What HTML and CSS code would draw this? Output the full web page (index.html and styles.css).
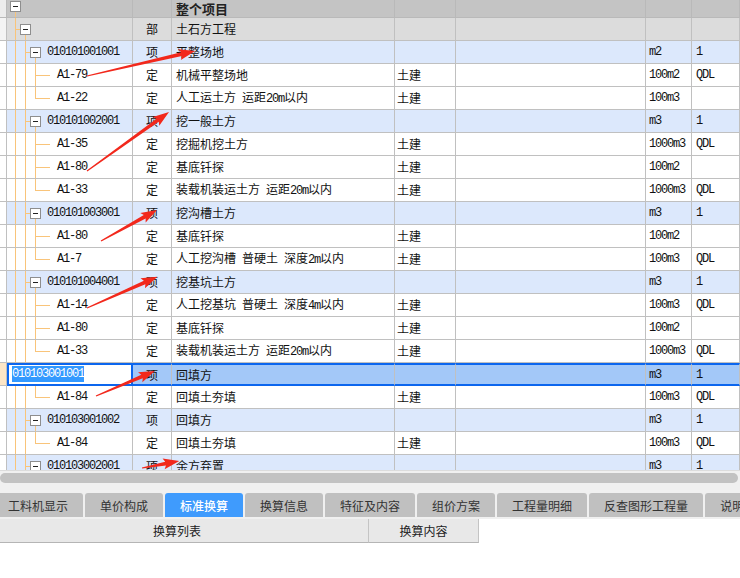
FILE: index.html
```html
<!DOCTYPE html>
<html lang="zh">
<head>
<meta charset="utf-8">
<title>整个项目</title>
<link rel="stylesheet" href="styles.css">
</head>
<body>
<div class="grid">
  <div class="row hdr">
    <div class="c g"></div>
    <div class="c t"><i class="bx"><b></b></i></div>
    <div class="c k"></div>
    <div class="c n"><strong>整个项目</strong></div>
    <div class="c s"></div><div class="c e"></div><div class="c un"></div><div class="c q"></div>
  </div>

  <div class="row bu">
    <div class="c g"></div>
    <div class="c t"><i class="tee"></i><i class="bx"><b></b></i></div>
    <div class="c k">部</div>
    <div class="c n">土石方工程</div>
    <div class="c s"></div><div class="c e"></div><div class="c un"></div><div class="c q"></div>
  </div>

  <div class="row xm">
    <div class="c g"></div>
    <div class="c t"><i class="vl"></i><i class="tee"></i><i class="bx"><b></b></i><span class="m cd">010101001001</span></div>
    <div class="c k">项</div>
    <div class="c n">平整场地</div>
    <div class="c s"></div><div class="c e"></div><div class="c un m">m2</div><div class="c q m">1</div>
  </div>
  <div class="row">
    <div class="c g"></div>
    <div class="c t"><i class="vl"></i><i class="vl"></i><i class="tee"></i><i class="hl"></i><span class="m lf">A1-79</span></div>
    <div class="c k">定</div>
    <div class="c n">机械平整场地</div>
    <div class="c s">土建</div><div class="c e"></div><div class="c un m">100m2</div><div class="c q m">QDL</div>
  </div>
  <div class="row">
    <div class="c g"></div>
    <div class="c t"><i class="vl"></i><i class="vl"></i><i class="elbl"></i><i class="hl"></i><span class="m lf">A1-22</span></div>
    <div class="c k">定</div>
    <div class="c n"><span>人工运土方<span class="m">&nbsp;</span>运距<span class="m">20m</span>以内</span></div>
    <div class="c s">土建</div><div class="c e"></div><div class="c un m">100m3</div><div class="c q m"></div>
  </div>

  <div class="row xm">
    <div class="c g"></div>
    <div class="c t"><i class="vl"></i><i class="tee"></i><i class="bx"><b></b></i><span class="m cd">010101002001</span></div>
    <div class="c k">项</div>
    <div class="c n">挖一般土方</div>
    <div class="c s"></div><div class="c e"></div><div class="c un m">m3</div><div class="c q m">1</div>
  </div>
  <div class="row">
    <div class="c g"></div>
    <div class="c t"><i class="vl"></i><i class="vl"></i><i class="tee"></i><i class="hl"></i><span class="m lf">A1-35</span></div>
    <div class="c k">定</div>
    <div class="c n">挖掘机挖土方</div>
    <div class="c s">土建</div><div class="c e"></div><div class="c un m">1000m3</div><div class="c q m">QDL</div>
  </div>
  <div class="row">
    <div class="c g"></div>
    <div class="c t"><i class="vl"></i><i class="vl"></i><i class="tee"></i><i class="hl"></i><span class="m lf">A1-80</span></div>
    <div class="c k">定</div>
    <div class="c n">基底钎探</div>
    <div class="c s">土建</div><div class="c e"></div><div class="c un m">100m2</div><div class="c q m"></div>
  </div>
  <div class="row">
    <div class="c g"></div>
    <div class="c t"><i class="vl"></i><i class="vl"></i><i class="elbl"></i><i class="hl"></i><span class="m lf">A1-33</span></div>
    <div class="c k">定</div>
    <div class="c n"><span>装载机装运土方<span class="m">&nbsp;</span>运距<span class="m">20m</span>以内</span></div>
    <div class="c s">土建</div><div class="c e"></div><div class="c un m">1000m3</div><div class="c q m">QDL</div>
  </div>

  <div class="row xm">
    <div class="c g"></div>
    <div class="c t"><i class="vl"></i><i class="tee"></i><i class="bx"><b></b></i><span class="m cd">010101003001</span></div>
    <div class="c k">项</div>
    <div class="c n">挖沟槽土方</div>
    <div class="c s"></div><div class="c e"></div><div class="c un m">m3</div><div class="c q m">1</div>
  </div>
  <div class="row">
    <div class="c g"></div>
    <div class="c t"><i class="vl"></i><i class="vl"></i><i class="tee"></i><i class="hl"></i><span class="m lf">A1-80</span></div>
    <div class="c k">定</div>
    <div class="c n">基底钎探</div>
    <div class="c s">土建</div><div class="c e"></div><div class="c un m">100m2</div><div class="c q m"></div>
  </div>
  <div class="row">
    <div class="c g"></div>
    <div class="c t"><i class="vl"></i><i class="vl"></i><i class="elbl"></i><i class="hl"></i><span class="m lf">A1-7</span></div>
    <div class="c k">定</div>
    <div class="c n"><span>人工挖沟槽<span class="m">&nbsp;</span>普硬土<span class="m">&nbsp;</span>深度<span class="m">2m</span>以内</span></div>
    <div class="c s">土建</div><div class="c e"></div><div class="c un m">100m3</div><div class="c q m">QDL</div>
  </div>

  <div class="row xm">
    <div class="c g"></div>
    <div class="c t"><i class="vl"></i><i class="tee"></i><i class="bx"><b></b></i><span class="m cd">010101004001</span></div>
    <div class="c k">项</div>
    <div class="c n">挖基坑土方</div>
    <div class="c s"></div><div class="c e"></div><div class="c un m">m3</div><div class="c q m">1</div>
  </div>
  <div class="row">
    <div class="c g"></div>
    <div class="c t"><i class="vl"></i><i class="vl"></i><i class="tee"></i><i class="hl"></i><span class="m lf">A1-14</span></div>
    <div class="c k">定</div>
    <div class="c n"><span>人工挖基坑<span class="m">&nbsp;</span>普硬土<span class="m">&nbsp;</span>深度<span class="m">4m</span>以内</span></div>
    <div class="c s">土建</div><div class="c e"></div><div class="c un m">100m3</div><div class="c q m">QDL</div>
  </div>
  <div class="row">
    <div class="c g"></div>
    <div class="c t"><i class="vl"></i><i class="vl"></i><i class="tee"></i><i class="hl"></i><span class="m lf">A1-80</span></div>
    <div class="c k">定</div>
    <div class="c n">基底钎探</div>
    <div class="c s">土建</div><div class="c e"></div><div class="c un m">100m2</div><div class="c q m"></div>
  </div>
  <div class="row">
    <div class="c g"></div>
    <div class="c t"><i class="vl"></i><i class="vl"></i><i class="elbl"></i><i class="hl"></i><span class="m lf">A1-33</span></div>
    <div class="c k">定</div>
    <div class="c n"><span>装载机装运土方<span class="m">&nbsp;</span>运距<span class="m">20m</span>以内</span></div>
    <div class="c s">土建</div><div class="c e"></div><div class="c un m">1000m3</div><div class="c q m">QDL</div>
  </div>

  <div class="row xm sel">
    <div class="c g"></div>
    <div class="c t"><span class="m hi">010103001001</span></div>
    <div class="c k">项</div>
    <div class="c n">回填方</div>
    <div class="c s"></div><div class="c e"></div><div class="c un m">m3</div><div class="c q m">1</div>
  </div>
  <div class="row">
    <div class="c g"></div>
    <div class="c t"><i class="vl"></i><i class="vl"></i><i class="elbl"></i><i class="hl"></i><span class="m lf">A1-84</span></div>
    <div class="c k">定</div>
    <div class="c n">回填土夯填</div>
    <div class="c s">土建</div><div class="c e"></div><div class="c un m">100m3</div><div class="c q m">QDL</div>
  </div>

  <div class="row xm">
    <div class="c g"></div>
    <div class="c t"><i class="vl"></i><i class="tee"></i><i class="bx"><b></b></i><span class="m cd">010103001002</span></div>
    <div class="c k">项</div>
    <div class="c n">回填方</div>
    <div class="c s"></div><div class="c e"></div><div class="c un m">m3</div><div class="c q m">1</div>
  </div>
  <div class="row">
    <div class="c g"></div>
    <div class="c t"><i class="vl"></i><i class="vl"></i><i class="elbl"></i><i class="hl"></i><span class="m lf">A1-84</span></div>
    <div class="c k">定</div>
    <div class="c n">回填土夯填</div>
    <div class="c s">土建</div><div class="c e"></div><div class="c un m">100m3</div><div class="c q m">QDL</div>
  </div>

  <div class="row xm">
    <div class="c g"></div>
    <div class="c t"><i class="vl"></i><i class="tee"></i><i class="bx"><b></b></i><span class="m cd">010103002001</span></div>
    <div class="c k">项</div>
    <div class="c n">余方弃置</div>
    <div class="c s"></div><div class="c e"></div><div class="c un m">m3</div><div class="c q m">1</div>
  </div>
</div>

<div class="hs"><div class="thumb"></div></div>

<div class="tabs">
  <div class="tab first">工料机显示</div>
  <div class="tab">单价构成</div>
  <div class="tab on">标准换算</div>
  <div class="tab">换算信息</div>
  <div class="tab">特征及内容</div>
  <div class="tab">组价方案</div>
  <div class="tab">工程量明细</div>
  <div class="tab">反查图形工程量</div>
  <div class="tab">说明信息</div>
</div>

<div class="sub">
  <div class="sc1">换算列表</div>
  <div class="sc2">换算内容</div>
</div>

<svg class="arrows" width="740" height="578" viewBox="0 0 740 578">
  <g fill="#f2281c">
    <polygon transform="translate(87 76) rotate(-13)" points="0,-0.6 97,-1.9 95,-5.5 111,0 95,5.5 97,1.9 0,0.6"/>
    <polygon transform="translate(87 171) rotate(-35.7)" points="0,-0.6 87,-1.9 85,-5.5 101,0 85,5.5 87,1.9 0,0.6"/>
    <polygon transform="translate(101 241) rotate(-29)" points="0,-0.6 50,-1.9 48,-5.5 64,0 48,5.5 50,1.9 0,0.6"/>
    <polygon transform="translate(87 308) rotate(-23.9)" points="0,-0.6 63,-1.9 61,-5.5 77,0 61,5.5 63,1.9 0,0.6"/>
    <polygon transform="translate(96 396) rotate(-23)" points="0,-0.6 50,-1.9 48,-5.5 64,0 48,5.5 50,1.9 0,0.6"/>
    <polygon transform="translate(142 468) rotate(-10.7)" points="0,-0.6 24,-1.9 22,-5.5 38,0 22,5.5 24,1.9 0,0.6"/>
  </g>
</svg>
</body>
</html>
```

FILE: styles.css
```css
:root {
  --ln: #f9c47a;
  --grid: #c0c0c0;
}

html, body {
  margin: 0;
  padding: 0;
}

body {
  width: 740px;
  height: 578px;
  overflow: hidden;
  position: relative;
  background: #fff;
  font-family: "Noto Sans CJK SC", "Noto Sans", sans-serif;
  font-size: 12px;
  color: #111;
}

.grid {
  height: 470px;
  overflow: hidden;
}

.row {
  display: grid;
  grid-template-columns: 7px 126px 39px 223px 61px 190px 46px 1fr;
  height: 23px;
}

.c {
  box-sizing: border-box;
  height: 23px;
  border-right: 1px solid var(--grid);
  border-bottom: 1px solid var(--grid);
  display: flex;
  align-items: center;
  white-space: nowrap;
  overflow: hidden;
  line-height: 1;
}

.m {
  font-family: "Liberation Mono", "DejaVu Sans Mono", monospace;
  font-size: 12px;
  letter-spacing: -1.2px;
}

.g { background: #fff; }

.t { padding-left: 3px; }
.t i {
  display: block;
  flex: none;
  align-self: stretch;
  width: 10px;
}

.vl {
  background: linear-gradient(var(--ln), var(--ln)) 5px 0 / 1px 100% no-repeat;
}
.tee {
  background:
    linear-gradient(var(--ln), var(--ln)) 5px 0 / 1px 100% no-repeat,
    linear-gradient(var(--ln), var(--ln)) 5px 11px / 5px 1px no-repeat;
}
.elbl {
  background:
    linear-gradient(var(--ln), var(--ln)) 5px 0 / 1px 12px no-repeat,
    linear-gradient(var(--ln), var(--ln)) 5px 11px / 5px 1px no-repeat;
}
.hl {
  background: linear-gradient(var(--ln), var(--ln)) 0 11px / 100% 1px no-repeat;
}

.t i.bx {
  width: 11px;
  display: flex;
  align-items: center;
  background: linear-gradient(var(--ln), var(--ln)) 5px 100% / 1px 50% no-repeat;
}
.bx b {
  display: block;
  box-sizing: border-box;
  width: 11px;
  height: 11px;
  border: 1px solid #8e8e8e;
  background: #fff;
  position: relative;
}
.bx b::after {
  content: "";
  position: absolute;
  left: 2px;
  top: 4px;
  width: 5px;
  height: 1px;
  background: #222;
}

.cd { margin-left: 6px; }
.lf { margin-left: 7px; }

.k { justify-content: center; }
.n { padding-left: 4px; }
.s { padding-left: 2px; }
.un { padding-left: 3px; }
.q { padding-left: 4px; }

/* header */
.hdr { height: 18px; }
.hdr .c {
  height: 18px;
  background: #c4c4c4;
  border-right-color: #b9b9b9;
  border-bottom-color: #b9b9b9;
  align-items: flex-start;
}
.hdr .g { background: #ececec; }
.hdr .t i.bx {
  align-items: flex-start;
  padding-top: 1px;
}
.hdr .n { align-items: center; }
.hdr .n strong {
  font-size: 13px;
  font-weight: 700;
  color: #222;
}

/* row kinds */
.bu .c { background: #dcdcdc; }
.bu .g { background: #f4f4f4; }
.xm .c { background: #dce8fc; }
.xm .g { background: #fff; }

/* selected row */
.sel .c {
  background: #a3c8f8;
  border-top: 2px solid #0c66ee;
  border-bottom: 2px solid #0c66ee;
}
.sel .g {
  background: #fde6c6;
  border-top: 0;
  border-bottom: 1px solid var(--grid);
}
.sel .t {
  background: #fff;
  border: 2px solid #0c66ee;
  padding-left: 3px;
  align-items: flex-start;
  padding-top: 1px;
}
.hi {
  background: #3399ff;
  color: #fff;
  padding: 2px 0;
}

/* horizontal scrollbar */
.hs {
  box-sizing: border-box;
  height: 22px;
  background: #f0f0f0;
  border-top: 1px solid #dcdcdc;
  padding: 2px 2px 0 0;
}
.thumb {
  height: 10px;
  border-radius: 5px;
  background: #c2c2c2;
}

/* tabs */
.tabs {
  display: flex;
  gap: 2px;
  height: 24px;
  padding: 1px 0 2px;
  background: #f0f0f0;
  overflow: hidden;
}
.tab {
  flex: none;
  display: flex;
  align-items: center;
  padding: 0 15px;
  background: #c0c0c0;
  color: #333;
  border-radius: 3px 3px 0 0;
  font-size: 12px;
}
.tab.first {
  padding-left: 8px;
  border-radius: 0 3px 0 0;
}
.tab.on {
  background: #3f9bfd;
  color: #fff;
  font-weight: 500;
}

/* sub header */
.sub {
  display: flex;
  height: 24px;
}
.sub div {
  box-sizing: border-box;
  height: 24px;
  display: flex;
  align-items: center;
  justify-content: center;
  background: #e8e8e8;
  border-right: 1px solid #c4c4c4;
  border-bottom: 1px solid #b5b5b5;
  color: #222;
}
.sc1 {
  width: 369px;
  padding-right: 14px;
}
.sc2 {
  width: 110px;
}

/* annotation arrows */
.arrows {
  position: absolute;
  left: 0;
  top: 0;
  pointer-events: none;
}
```
